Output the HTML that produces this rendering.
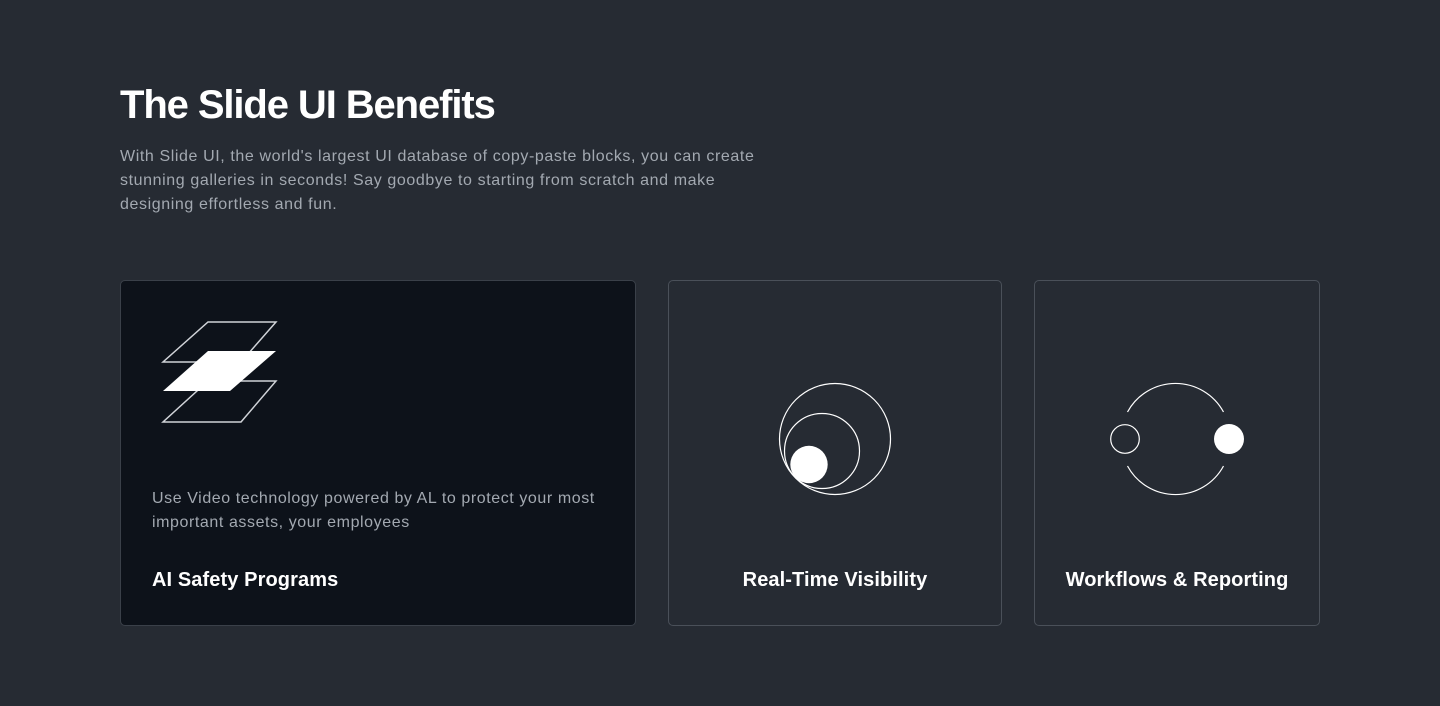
<!DOCTYPE html>
<html><head><style>
*{margin:0;padding:0;box-sizing:border-box}
body{width:1440px;height:706px;background:#262b33;font-family:"Liberation Sans",sans-serif;position:relative;overflow:hidden}
h1{position:absolute;left:120px;top:82px;font-size:40px;font-weight:bold;color:#fff;letter-spacing:-1.1px;line-height:46px}
.p{position:absolute;left:120px;top:145px;width:650px;font-size:16px;line-height:24px;color:#a3a9b1;letter-spacing:0.6px}
.card{position:absolute;top:280px;height:346px;border:1px solid #4a5059;border-radius:5px;background:#262b33}
.t{position:absolute;bottom:33px;left:0;right:0;text-align:center;font-size:20px;font-weight:bold;color:#fff;line-height:24px;letter-spacing:0.1px}
</style></head><body>
<h1>The Slide UI Benefits</h1>
<div class="p">With Slide UI, the world's largest UI database of copy-paste blocks, you can create stunning galleries in seconds! Say goodbye to starting from scratch and make designing effortless and fun.</div>
<div class="card" style="left:120px;width:516px;background:#0d121a;border-color:#3a4049"></div>
<div style="position:absolute;left:152px;top:487px;width:470px;font-size:16px;line-height:24px;color:#a3a9b1;letter-spacing:0.58px">Use Video technology powered by AL to protect your most important assets, your employees</div>
<div style="position:absolute;left:152px;top:568px;font-size:20px;font-weight:bold;color:#fff;line-height:24px;letter-spacing:0.1px">AI Safety Programs</div>
<div class="card" style="left:668px;width:334px"><div class="t">Real-Time Visibility</div></div>
<div class="card" style="left:1034px;width:286px"><div class="t">Workflows &amp; Reporting</div></div>
<svg width="1440" height="706" style="position:absolute;left:0;top:0" fill="none">
<polygon points="208,322 276,322 241,362 163,362" stroke="#d0d3d8" stroke-width="1.5"/>
<polygon points="208,381 276,381 241,422 163,422" stroke="#d0d3d8" stroke-width="1.5"/>
<polygon points="208,351 276,351 230,391 163,391" fill="#fff"/>
<circle cx="835" cy="439" r="55.5" stroke="#fff" stroke-width="1.2"/>
<circle cx="822" cy="451" r="37.5" stroke="#fff" stroke-width="1.2"/>
<circle cx="809" cy="464.5" r="18.7" fill="#fff"/>
<path d="M1127.5 412 A54.6 54.6 0 0 1 1223.5 412" stroke="#fff" stroke-width="1.2"/>
<path d="M1127.5 466 A54.6 54.6 0 0 0 1223.5 466" stroke="#fff" stroke-width="1.2"/>
<circle cx="1125" cy="439" r="14.3" stroke="#fff" stroke-width="1.2"/>
<circle cx="1229" cy="439" r="15" fill="#fff"/>
</svg>
</body></html>
